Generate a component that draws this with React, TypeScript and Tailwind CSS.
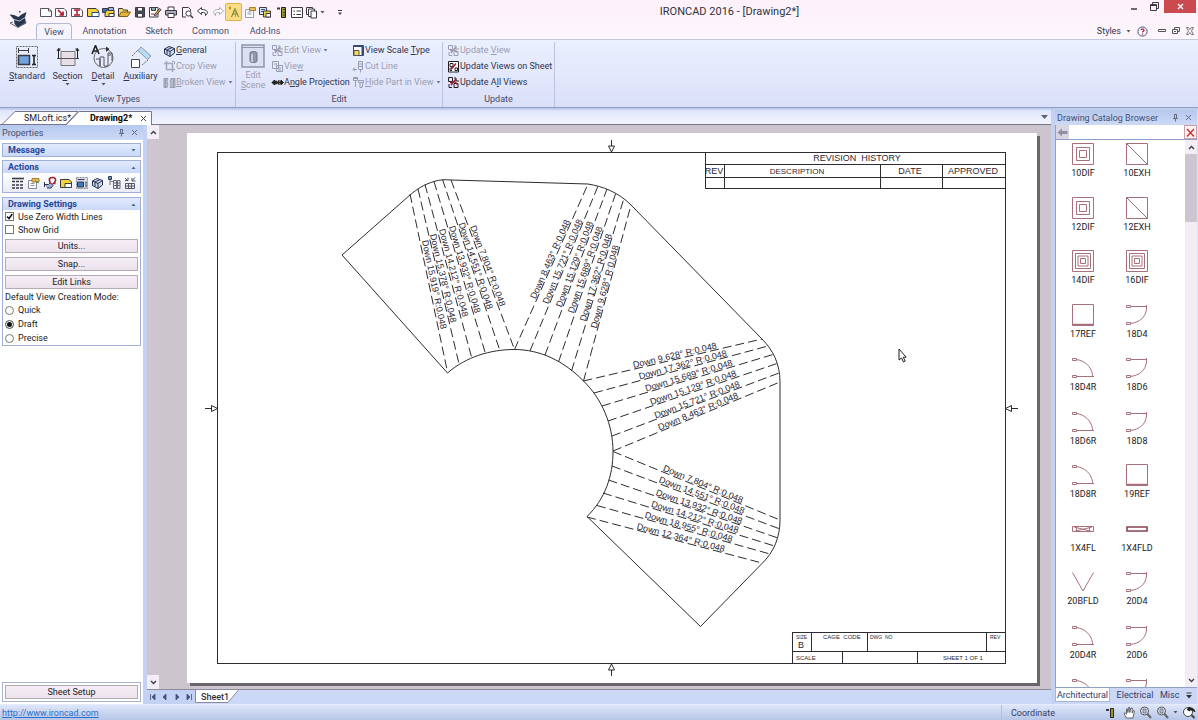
import { useState, type ReactNode } from "react";

function Ico({ w = 14, h = 14, children }: { w?: number; h?: number; children: ReactNode }) {
  return (
    <svg width={w} height={h} viewBox={`0 0 ${w} ${h}`} fill="none" stroke="#3a3a44" strokeWidth="1" className="shrink-0" aria-hidden="true">
      {children}
    </svg>
  );
}

const Caret = ({ color = "#555" }: { color?: string }) => (
  <svg width="5" height="3" viewBox="0 0 5 3" className="shrink-0" aria-hidden="true"><path d="M0.5 0h4L2.5 2.6z" fill={color} /></svg>
);

const sheetPath = "M1.500 3.500h8.500l2.500 2.500v5.500h-11z";

const quickIcons: { name: string; icon: ReactNode; active?: boolean }[] = [
  { name: "New", icon: <><path d={sheetPath} fill="#fff" stroke="#55555f" /><path d="M9.500 3.500V6H12" stroke="#55555f" /></> },
  { name: "New scene", icon: <><path d={sheetPath} fill="#fff" stroke="#55555f" /><path d="M4 5l5 5M9 6.500V10H5.500" stroke="#b01830" strokeWidth="1.700" /></> },
  { name: "New drawing", icon: <><path d={sheetPath} fill="#fff" stroke="#55555f" /><path d="M4 5h6M4 10h6M7 5v5" stroke="#b01830" strokeWidth="1.500" /></> },
  { name: "New sheet", icon: <><path d={sheetPath} fill="#f3d335" /><path d="M6 7.500h7v4H6z" fill="#fff" stroke="#244a8c" /></> },
  { name: "New part", icon: <><path d="M1.500 3.500h6v4h-6z" fill="#3b6cb4" /><path d="M6 5h7v6.500H4V8z" fill="#f3d335" /><path d="M7.500 2.500h5v3h-5z" fill="#9bbbe6" /><path d="M8 8.500h5v3H8z" fill="#fff" /></> },
  { name: "Open", icon: <><path d="M1.500 11V3.500h4l1 1.500h4v2" fill="#f3d668" /><path d="M1.500 11.500l3-4.500h9l-3 4.500z" fill="#e3b53a" stroke="#7a5c1c" /></> },
  { name: "Save", icon: <><path d="M2.500 2.500h9v9.500h-9z" fill="#4a4e5c" /><path d="M4.500 2.500h5v3.500h-5zM4.500 8.500h5v3.500h-5z" fill="#fff" /></> },
  { name: "Save as", icon: <><path d="M1.500 2.500h8.500v9.500H1.500z" fill="#fff" /><path d="M3.500 2.500h4v3h-4z" fill="#8aa" /><path d="M6 10l5.500-6.500 1.500 1.200L7.500 11z" fill="#e5a434" /><path d="M3 9h3" stroke="#b01830" /></> },
  { name: "Print", icon: <><path d="M4 5V2h6v3" fill="#fff" /><path d="M1.500 5.500h11v4.500h-11z" fill="#a9acb8" /><path d="M4 8.500h6v4H4z" fill="#fff" /></> },
  { name: "Preview", icon: <><path d="M2.500 12V2.500h6l2 2V6" /><path d="M2.500 12H6" /><circle cx="8.500" cy="8.500" r="2.600" fill="#fff" /><path d="M10.500 10.500l2.500 2.500" strokeWidth="1.600" /></> },
  { name: "Undo", icon: <path d="M5.500 2.500L1.500 6l4 3.500v-2c3-.5 4.500.5 4 3 3.500-3 2-6-4-6z" fill="#fff" /> },
  { name: "Redo", icon: <path d="M8.500 2.500l4 3.500-4 3.500v-2c-3-.5-4.500.5-4 3-3.500-3-2-6 4-6z" fill="#fff" stroke="#a9a9b4" /> },
  { name: "Smart annotation", active: true, icon: <><path d="M4.500 12L8 3.500l3.500 8.500M6 9h4M7 6h2" stroke="#6d7c2c" /><path d="M8.500 3v9" stroke="#7fa0d0" /><path d="M2 2l2 2M4 2L2 4M3 1.500v3" stroke="#c08a20" /></> },
  { name: "Properties", icon: <><path d="M2.500 4.500h8v8h-8z" fill="#fff" stroke="#99a" /><path d="M4.500 7h4M4.500 9h4" stroke="#8899bb" /><path d="M6.500 2.500h6v3h-6z" fill="#e5c35a" stroke="#a98030" /></> },
  { name: "Layers", icon: <><path d="M1.500 2.500h7v7h-7z" fill="#dce6f8" /><path d="M3 4.500h4M3 6.500h4" stroke="#2c559c" /><path d="M5.500 6h7v6h-7z" fill="#f3d335" /><path d="M8 8.500h4.500v3.500H8z" fill="#fff" /></> },
  { name: "Measure", icon: <><path d="M7.500 2.500h4v10h-4z" fill="#9c9a2c" stroke="#222" /><path d="M9.500 4.500h2M9.500 7.500h2M9.500 10h2" stroke="#222" /><path d="M3 3.500h3" strokeWidth="2" /></> },
  { name: "Options list", icon: <><path d="M1.500 2.500h11v10h-11z" fill="#fff" /><path d="M3.500 6h1.500M3.500 9.500h1.500M6.500 6h4.500M6.500 9.500h4.500" /></> },
  { name: "Windows", icon: <><path d="M1.500 2.500h6v7h-6z" fill="#fff" /><path d="M3.500 4h6v7.500h-6z" fill="#fff" /><path d="M6 6h5.500v7H6z" fill="#fff" /></> },
];

const general = <><path d="M1.500 5L6 2.500l5.500 2V9L7 12.500 1.500 9.500z" fill="#cfd6ee" stroke="#24304e" /><path d="M1.500 5L7 7.500l4.500-3M7 7.500v5M4 6v4.500M9 3.500L4 6" stroke="#24304e" /></>;
const swap = (ink: string, red?: string) => <><path d="M1.500 1.500h4v4h-4zM7 7.500h4v4H7zM2 8v3.500h3M7 2h2v3h3" stroke={ink} /><path d="M4 9l5-6M3 6.500h3M7.500 5.500l3 3" stroke={red ?? ink} strokeWidth="1.500" /></>;

const smallIcons: Record<string, ReactNode> = {
  general,
  crop: <><path d="M3.500 1v8.500H12M1 3.500h8.500V12" stroke="#a3a6ba" strokeWidth="1.500" /><path d="M9 1.500h2.500V4" stroke="#a3a6ba" /></>,
  broken: <><path d="M1 2.500h4l-1 3 1 3-1 3H1zM12 2.500H8l-1 3 1 3-1 3h5z" fill="#b9bccb" stroke="#9a9db0" /><path d="M2.500 3v8M10.500 3v8" stroke="#9a9db0" /></>,
  edit: swap("#9a9db0"),
  view: <><path d="M1.500 1.500h6v7h-6zM5.500 5.500h6v6h-6z" fill="#e4e8f8" stroke="#9a9db0" /><path d="M7 8h3M7 10h3M3 4h3" stroke="#9a9db0" /></>,
  angle: <><path d="M1 6.500L3.500 4v5zM12.500 6.500L10 4v5z" fill="#222" stroke="#222" /><circle cx="5" cy="6.500" r="1.500" fill="#222" stroke="#222" /><path d="M7.500 4.500l2 1v2l-2 1zM1 6.500h11" stroke="#222" /></>,
  scale: <><path d="M1.500 1.500h10v10h-10z" fill="#fff" stroke="#34487c" /><path d="M2 2h9M10.500 2v9" stroke="#34487c" strokeWidth="2" /><path d="M2 6.500h5v5H2z" fill="#f5dc4c" stroke="#555" /></>,
  cut: <><path d="M6.500 1.500h4v8h-4zM1 9.500h4M3 7.500l-2 2 2 2M8.500 9.500v3" stroke="#9a9db0" /><path d="M7 4h3M7 6.500h3" stroke="#9a9db0" /></>,
  hide: <><path d="M1.500 1.500h4v3h-4zM6.500 4.500h5v2h-5zM3.500 5v6M8 7v4.500h2L11 7" stroke="#9a9db0" /><path d="M1 2.500h5" stroke="#9a9db0" /></>,
  upd: swap("#9a9db0"),
  updSheet: <><path d="M1.500 1.500h10v10.500h-10z" fill="#fff" stroke="#222" /><path d="M3 3.500h3v3H3zM8 8h2.500v2.500H8zM3 8v2.500h2" stroke="#222" /><path d="M4 9.500l5-6M3.500 7h3" stroke="#a01830" strokeWidth="1.500" /></>,
  updAll: swap("#222", "#a01830"),
};

function Mn({ t }: { t: string }) {
  const i = t.indexOf("&");
  if (i < 0) return <>{t}</>;
  return <span>{t.slice(0, i)}<span className="underline underline-offset-1">{t[i + 1]}</span>{t.slice(i + 2)}</span>;
}

function Small({ icon, t, off, drop }: { icon: string; t: string; off?: boolean; drop?: boolean }) {
  return (
    <button disabled={off} className="flex h-4 items-center whitespace-nowrap text-[#30344e] disabled:text-[#9a9db2]">
      <Ico w={13} h={13}>{smallIcons[icon]}</Ico>
      <Mn t={t} />
      {drop && <span className="ml-0.5"><Caret color={off ? "#777a90" : "#555"} /></span>}
    </button>
  );
}

function Big({ t, drop, icon, w }: { t: string; drop?: boolean; icon: ReactNode; w: string }) {
  return (
    <button className={`flex flex-col items-center pt-[3px] text-[#30344e] ${w}`}>
      <Ico w={24} h={24}>{icon}</Ico>
      <span className="mt-0.5 h-[11px] leading-[11px]"><Mn t={t} /></span>
      {drop && <span className="mt-px"><Caret /></span>}
    </button>
  );
}

function Group({ label, children, w }: { label: string; children: ReactNode; w: string }) {
  return (
    <section aria-label={label} className={`flex flex-col border-r border-[#bcc3dc] ${w}`}>
      <div className="flex flex-1">{children}</div>
      <div className="flex h-4 items-center justify-center text-[#454a68]">{label}</div>
    </section>
  );
}

function Header() {
  return (
    <header className="flex h-[39px] shrink-0 bg-linear-to-b from-[#fdf1fa] to-[#fdf6fd]">
      <div className="flex w-[36px] items-start justify-center pt-[10px]">
        <svg width="19" height="19" viewBox="0 0 19 19" aria-label="IronCAD" role="img">
          <path d="M0.500 4.500L5 5l4.500 2 3-2.500L17.500 2 16 7.500l1 6-8 4L5.500 14 5 9.500z" fill="#26364c" />
          <path d="M1 13l3 -1M1 13l8 4.500 8.500-5.500" fill="none" stroke="#5d6b7e" />
          <path d="M5 9.500l5.500 1.500 5.500-3.500" fill="none" stroke="#b6c2d0" /><path d="M10 1h1.500v1.500H10z" fill="#26364c" />
        </svg>
      </div>
      <div className="flex min-w-0 flex-1 flex-col">
        <div className="flex h-[23px] items-start">
          <div className="flex w-[310px] items-center pl-0.5 pt-1">
            <div className="flex w-[282px] items-center justify-between">
              {quickIcons.map((q) => (
                <button key={q.name} aria-label={q.name} className={q.active ? "flex h-4 w-[15px] items-center justify-center rounded-[1px] bg-[#f9dc84] outline outline-[#e0b24a]" : "flex h-4 w-[15px] items-center justify-center"}>
                  <Ico>{q.icon}</Ico>
                </button>
              ))}
            </div>
            <Caret />
            <span className="ml-3"><Ico w={7} h={7}><path d="M1 1.500h4" /><path d="M1 3.500h4L3 6z" fill="#444" stroke="none" /></Ico></span>
          </div>
          <h1 className="flex-1 pt-1 text-center text-[11px] leading-4 text-[#33333b]">IRONCAD 2016 - [Drawing2*]</h1>
          <div className="flex w-[85px] items-start justify-end">
            <button aria-label="Minimize" className="flex h-[13px] w-5 items-center justify-center"><Ico w={8} h={8}><path d="M1 6h6" strokeWidth="1.500" /></Ico></button>
            <button aria-label="Restore" className="flex h-[13px] w-5 items-center justify-center"><Ico w={9} h={9}><path d="M2.500 2.500v-2h6v6h-2M0.500 2.500h6v6h-6zM0.500 3.500h6" /></Ico></button>
            <button aria-label="Close" className="mr-0.5 flex h-[13px] w-8 items-center justify-center bg-[#cb4a50]"><Ico w={7} h={7}><path d="M1 1l5 5M6 1L1 6" stroke="#fff" strokeWidth="1.300" /></Ico></button>
          </div>
        </div>
        <div className="flex h-4 items-stretch text-[#454a68]">
          <nav className="flex items-stretch" aria-label="Ribbon">
            <button className="w-9 rounded-t-sm border border-b-0 border-[#b4bad2] bg-[#f3f4fe]">View</button>
            <button className="w-[65px]">Annotation</button>
            <button className="w-11">Sketch</button>
            <button className="w-[59px]">Common</button>
            <button className="w-[50px]">Add-Ins</button>
          </nav>
          <div className="ml-auto flex items-center pr-1 text-[#30344e]">
            <button className="mr-1.5 flex items-center gap-[5px]">Styles <Caret /></button>
            <button aria-label="Help" className="mr-2.5"><Ico w={11} h={11}><circle cx="5.500" cy="5.500" r="4.600" stroke="#3d4f8a" fill="#fff" /><path d="M4 4.300c0-2 3-2 3 0 0 1.200-1.500 1-1.500 2.200M5.500 7.500v1.200" stroke="#c02038" strokeWidth="1.300" /></Ico></button>
            <button aria-label="Minimize document" className="mr-1.5"><Ico w={8} h={8}><path d="M0.500 2.500h7v2h-7z" stroke="#555" /></Ico></button>
            <button aria-label="Restore document" className="mr-1.5"><Ico w={8} h={8}><path d="M2.500 2.500v-2h5v4h-2M0.500 2.500h5v4h-5zM2 4.500h2" stroke="#555" /></Ico></button>
            <button aria-label="Close document"><Ico w={8} h={8}><path d="M0.500 0.500h2L4 2.500l1.500-2h2L5.500 4l2 3.500h-2L4 5.500 2.500 7.500h-2l2-3.500z" stroke="#555" strokeWidth=".8" /></Ico></button>
          </div>
        </div>
      </div>
    </header>
  );
}

function Ribbon() {
  return (
    <div className="flex h-[68px] shrink-0 border-t border-[#c3c8dc] bg-linear-to-b from-[#ebf0fe] to-[#dbe0fa] pt-0.5">
      <Group label="View Types" w="w-[236px]">
        <Big w="ml-[7px] w-10" t="&Standard" icon={<><path d="M1.500 1.500h21v21h-21z" strokeDasharray="2 1" stroke="#666" /><path d="M3.500 5.500h10M3.500 3v5M13.500 3v5" /><path d="M3.500 10.500h11v9h-11z" fill="#6fa3de" strokeWidth="1.500" /><path d="M17 10.500h4M17 19.500h4M19 10.500v9" strokeWidth="1.600" stroke="#222" /></>} />
        <Big w="w-[41px]" drop t="Se&ction" icon={<><path d="M5 6.500h14v14H5z" fill="#e6dfe8" stroke="#777" /><path d="M1 13.500h22" stroke="#555" /><path d="M2.500 14V4M21.500 14V4M1 6l1.500-2.500L4 6M20 6l1.500-2.500L23 6M2.500 4h2M21.500 4h-2" stroke="#222" /></>} />
        <Big w="w-[30px]" drop t="&Detail" icon={<><circle cx="12.500" cy="13" r="9.500" stroke="#666" /><path d="M5 14h4v7M9 21V12h4v9h4V8h4v8M17 10h3" stroke="#555" /><path d="M1 9L4.500 0.500 8 9M2.500 6h4" stroke="#222" strokeWidth="1.600" /><path d="M15 2l3 2-3 2.500" fill="#333" /></>} />
        <Big w="w-[45px]" t="&Auxiliary" icon={<><path d="M2.500 14.500h8v8h-8z" fill="#fff" stroke="#444" /><path d="M12 2l10 9-3.500 3.500L9 5.500z" fill="#b9dcf5" stroke="#8a98a8" /><path d="M3 11L9 5M13 20l6-5" strokeDasharray="2 1" stroke="#666" /></>} />
        <div className="flex flex-col">
          <Small icon="general" t="&General" /><Small icon="crop" t="Crop View" off /><Small icon="broken" t="&Broken View" off drop />
        </div>
      </Group>
      <Group label="Edit" w="w-[207px]">
        <button disabled className="ml-1.5 flex w-[22px] flex-col items-center pt-0.5 text-[#9a9db2]">
          <Ico w={24} h={24}><path d="M1 1h22v22H1z" stroke="#9194aa" fill="#dde0f0" strokeWidth="1.500" /><path d="M1 3.500h22" stroke="#9194aa" /><path d="M9 9c0-2 7-2 7 0v8c0 2-7 2-7 0z" fill="#9296ac" stroke="#6f7390" /><path d="M11 10v8" stroke="#fff" /></Ico>
          <span className="mt-0.5 leading-[10px]">Edit</span><span className="leading-[10px]"><Mn t="&Scene" /></span>
        </button>
        <div className="ml-[7px] flex w-[81px] flex-col">
          <Small icon="edit" t="Edit View" off drop /><Small icon="view" t="Vie&w" off /><Small icon="angle" t="A&ngle Projection" />
        </div>
        <div className="flex flex-col">
          <Small icon="scale" t="View Scale &Type" /><Small icon="cut" t="Cut Line" off /><Small icon="hide" t="&Hide Part in View" off drop />
        </div>
      </Group>
      <Group label="Update" w="w-[112px]">
        <div className="ml-1 flex flex-col">
          <Small icon="upd" t="Update &View" off /><Small icon="updSheet" t="Update Views on Sheet" /><Small icon="updAll" t="Update A&ll Views" />
        </div>
      </Group>
    </div>
  );
}

const Pin = () => <Ico w={7} h={8}><path d="M2 0.500h3M2.500 0.500v3.500M4.500 0.500v3.500M1 4.500h5M3.500 4.500v3" stroke="#666c88" /></Ico>;
const Cross = ({ c = "#666c88" }: { c?: string }) => <Ico w={7} h={7}><path d="M1 1l5 5M6 1L1 6" stroke={c} /></Ico>;

function PanelTitle({ t }: { t: string }) {
  return (
    <div className="flex h-[15px] shrink-0 items-center gap-1.5 bg-linear-to-b from-[#b5c8ee] to-[#cddaf6] pl-0.5 pr-[5px] text-[#454f70]">
      <h2 className="mr-auto whitespace-nowrap">{t}</h2>
      <button aria-label={`Pin ${t}`}><Pin /></button>
      <button aria-label={`Close ${t}`}><Cross /></button>
    </div>
  );
}

function Box({ t, open, children }: { t: string; open?: boolean; children?: ReactNode }) {
  return (
    <section className="border border-[#a0b0d8] bg-white">
      <button className="flex h-3 w-full items-center bg-linear-to-b from-[#e2ebfd] to-[#c9d8f8] pl-[5px] pr-1 font-bold text-[#24489c]">
        <span className="mr-auto">{t}</span>
        <span className={open ? "rotate-180" : ""}><Caret color="#50618f" /></span>
      </button>
      {children}
    </section>
  );
}

const actionIcons: [string, ReactNode][] = [
  ["Line style", <g key="a"><path d="M1 2.500h12" strokeWidth="1.600" /><path d="M1 5.500h12M1 9h12M1 12h12" strokeWidth="1.600" strokeDasharray="3 1" /></g>],
  ["Sheet properties", <g key="b"><path d="M1.500 4.500h8v8h-8z" fill="#fff" stroke="#889" /><path d="M3.500 7.500h4M3.500 9.500h4" stroke="#8899bb" /><path d="M5 2.500h7v3.500H5z" fill="#e0b85a" stroke="#a98030" /><path d="M8 5l4 2" stroke="#4d8f3a" /></g>],
  ["Snap", <g key="c"><path d="M1.500 6v5M1.500 8.500h4l2-2 2.500 3-2 2.500H4" fill="#9fb4dc" stroke="#334" /><path d="M7.500 7.500C5 2 7 1.500 9.500 1.500S13.500 3 12 6l-1.500 1.500h2" stroke="#9b2034" strokeWidth="1.600" /></g>],
  ["New sheet", <g key="d"><path d={sheetPath} fill="#f3d335" /><path d="M6 7.500h6.500v4H6z" fill="#fff" stroke="#345" /></g>],
  ["Standard view", <g key="e"><path d="M1.500 1.500h11v11h-11z" fill="#dde" stroke="#889" strokeDasharray="2 1" /><path d="M2.500 6h6v5h-6z" fill="#3f78bf" /><path d="M11 5.500v6M2.500 3.500h7" /></g>],
  ["General view", <g key="f">{general}</g>],
  ["Views", <g key="g"><path d="M1.500 0.500h3v3h-3z" fill="#5f8fd0" /><path d="M3 4v5M4 5.500h2M6.500 4.500h3v8h-3zM10.500 4.500h2.500v8h-2.500zM7 7h6M7 9.500h6" stroke="#667" /></g>],
  ["Table", <g key="h"><path d="M2 2l3 3M12 1.500L9 5M5 1.500v3H2M9 2v3h3.500" stroke="#556" /><path d="M2.500 7.500h9v5h-9zM2.500 10h9M5.500 7.500v5M8.500 7.500v5" stroke="#556" /></g>],
];

const flat = "h-[14px] border border-[#b3abb5] bg-linear-to-b from-[#f6eef6] to-[#ece2ec] text-[#222]";

function Properties() {
  return (
    <aside className="flex w-[147px] shrink-0 flex-col border-r-4 border-[#c4d1f2] bg-white">
      <PanelTitle t="Properties" />
      <div className="flex flex-1 flex-col px-0.5 pt-[3px]">
        <div className="flex flex-col gap-[3px] pb-1">
          <Box t="Message" />
          <Box t="Actions" open>
            <div className="flex h-[19px] items-center gap-0.5 bg-linear-to-b from-white to-[#e8ebf5] pl-2">
              {actionIcons.map(([n, i]) => <button key={n} aria-label={n}><Ico>{i}</Ico></button>)}
            </div>
          </Box>
        </div>
        <Box t="Drawing Settings" open>
          <div className="flex flex-col px-0.5 text-[#1c1c22]">
            {[["Use Zero Width Lines", true], ["Show Grid", false]].map(([l, c]) => (
              <label key={String(l)} className="flex h-[13px] items-center gap-1">
                <span className="relative flex size-[9px]">
                  <input type="checkbox" defaultChecked={Boolean(c)} className="peer size-[9px] appearance-none border border-[#777] bg-white" />
                  <svg viewBox="0 0 9 9" className="pointer-events-none absolute inset-0 hidden peer-checked:block" aria-hidden="true"><path d="M2 4.500l2 2L7.300 2" fill="none" stroke="#111" strokeWidth="1.500" /></svg>
                </span>
                {l}
              </label>
            ))}
            <div className="flex flex-col gap-1 pb-0.5 pt-[3px]">
              <button className={flat}>Units...</button>
              <button className={flat}>Snap...</button>
              <button className={flat}>Edit Links</button>
            </div>
            <fieldset>
              <legend className="h-3 leading-3">Default View Creation Mode:</legend>
              {["Quick", "Draft", "Precise"].map((m) => (
                <label key={m} className="flex h-[14px] items-center gap-1">
                  <input type="radio" name="mode" defaultChecked={m === "Draft"} className="size-[9px] appearance-none rounded-full border border-[#777] bg-white checked:bg-[#111] checked:shadow-[inset_0_0_0_1px_white]" />
                  {m}
                </label>
              ))}
            </fieldset>
          </div>
        </Box>
        <div className="mb-0.5 mt-auto flex flex-col border border-[#a9b2d0] p-0.5">
          <button className={flat}>Sheet Setup</button>
        </div>
      </div>
    </aside>
  );
}

type Fold = [number, number, number, number, string, number, number];
const folds: Fold[] = [
  [410, 194, 447.5, 372, "Down 15.919° R:0.048", 421, 241],
  [418, 189, 459, 364, "Down 15.378° R:0.048", 429, 235],
  [425, 184.5, 471.5, 357, "Down 14.212° R:0.048", 438, 230],
  [434, 181.5, 485, 352, "Down 13.932° R:0.048", 448, 227],
  [442.5, 179.5, 500, 351, "Down 14.551° R:0.048", 457.5, 224],
  [451, 180, 514.5, 349.5, "Down 7.804° R:0.048", 469, 227],
  [514.5, 349.5, 588, 184, "Down 8.463° R:0.048", 536.5, 300],
  [530, 351, 598, 186, "Down 15.721° R:0.048", 549, 305],
  [545, 355, 607, 189, "Down 15.129° R:0.048", 562.5, 308],
  [558.5, 362, 616, 192.5, "Down 15.689° R:0.048", 574.5, 314],
  [571.5, 371, 624, 198, "Down 17.362° R:0.048", 586.5, 322],
  [583.5, 381, 631, 205, "Down 9.628° R:0.048", 597.5, 329],
  [583.5, 381, 762, 339, "Down 9.628° R:0.048", 634, 369],
  [594, 393, 768, 346, "Down 17.362° R:0.048", 640, 380.5],
  [602, 406, 773, 354.5, "Down 15.689° R:0.048", 646.5, 392.5],
  [608, 421, 777, 363.5, "Down 15.129° R:0.048", 651.5, 406],
  [612, 436, 779, 373, "Down 15.721° R:0.048", 656, 419.5],
  [613, 451, 780, 382, "Down 8.463° R:0.048", 660, 431.5],
  [613, 451.5, 780, 520, "Down 7.804° R:0.048", 662, 471.5],
  [612, 466, 780, 529, "Down 14.551° R:0.048", 658, 483],
  [608.5, 480, 778, 538, "Down 13.932° R:0.048", 655, 496],
  [603, 493, 774.5, 546, "Down 14.212° R:0.048", 650.5, 507.5],
  [597, 505.5, 770, 554, "Down 18.955° R:0.048", 644, 518.5],
  [587, 517, 762, 563, "Down 12.364° R:0.048", 636, 530],
];

function Drawing() {
  return (
    <svg viewBox="187 133 850 550" className="absolute inset-0 size-full" fontFamily="'Liberation Sans', Arial, sans-serif" fill="none" stroke="#2c2c32" strokeWidth="1">
      <g shapeRendering="crispEdges">
        <path d="M217.500 152.500H1005.500V663.500H217.500z" />
        <path d="M705.500 152.500V188.500H1005M705.500 164.500H1005M705.500 177.500H1005M724.500 164.500V188M880.500 164.500V188M942.500 164.500V188" />
        <path d="M792.500 663V632.500H1005M792.500 651.500H1005M811.500 632.500V651M867.500 632.500V651M986.500 632.500V651M842.500 651.500V663M917.500 651.500V663" />
        <path d="M611.500 140V152M611.500 664V676M205 408.500H217M1006 408.500H1018" />
      </g>
      <path d="M608.500 146l3 6 3-6zM608.500 670l3-6 3 6zM211.500 405.500l6 3-6 3zM1011.500 405.500l-6 3 6 3z" fill="#fff" />
      <path strokeLinejoin="round" d="M447.500 373L342 255 410 195C417 189 424 184.500 434 181.500 440 179.500 445 179.500 451 180L588 184C603 186.500 618 192 631 205L762 339C773 350 780 364 780 382V520C780 537 774 552 762 563.500L700.500 626.500 587 516.500C605 499 613 476 613 451.500 613 425 602 399 583.500 381 564 361 540 349.500 514.500 349.500 490 349.500 466 357 447.500 373" />
      {folds.map(([x1, y1, x2, y2], i) => <path key={i} d={`M${x1} ${y1}L${x2} ${y2}`} strokeDasharray="9 4" />)}
      <g fill="#2c2632" stroke="none" fontSize="9">
        {folds.map(([x1, y1, x2, y2, t, x, y], i) => (
          <text key={i} transform={`translate(${x} ${y}) rotate(${(Math.atan2(y2 - y1, x2 - x1) * 180) / Math.PI})`} y="-1">{t}</text>
        ))}
        <g textAnchor="middle">
          <text x="857" y="161">REVISION&#160; HISTORY</text>
          <text x="714" y="174">REV</text>
          <text x="797" y="174" fontSize="8">DESCRIPTION</text>
          <text x="910" y="174">DATE</text>
          <text x="973" y="174">APPROVED</text>
        </g>
        <g fontSize="6">
          <text x="796" y="639" fontSize="5">SIZE</text>
          <text x="798" y="648" fontSize="9">B</text>
          <text x="823" y="639">CAGE&#160; CODE</text>
          <text x="870" y="639" fontSize="5">DWG&#160; NO</text>
          <text x="990" y="639" fontSize="5">REV</text>
          <text x="796" y="660">SCALE</text>
          <text x="943" y="660">SHEET 1 OF 1</text>
        </g>
      </g>
      <path d="M899 349v11l2.500-2 2 4 1.700-1-2-3.800h3z" fill="#fff" stroke="#222" />
    </svg>
  );
}

function Scroll({ thumb }: { thumb: string }) {
  return (
    <div className="flex w-3 shrink-0 flex-col bg-[#f3edf6]">
      <button aria-label="Scroll up" className="flex h-[14px] items-center justify-center"><Ico w={7} h={5}><path d="M1 4l2.500-2.500L6 4" strokeWidth="1.300" /></Ico></button>
      <div className="flex-1"><div className={`bg-[#cdc5cf] ${thumb}`} /></div>
      <button aria-label="Scroll down" className="flex h-[14px] items-center justify-center"><Ico w={7} h={5}><path d="M1 1l2.500 2.500L6 1" strokeWidth="1.300" /></Ico></button>
    </div>
  );
}

function DocTabs() {
  return (
    <div className="flex h-[15px] shrink-0 items-stretch border-b border-[#77758a] bg-linear-to-b from-[#dfe6fb] to-[#f4f4fe]">
      <div className="relative flex w-[152px]">
        <svg viewBox="0 0 152 15" className="absolute inset-0 h-[15px] w-[152px]" fill="#fff" stroke="#77758a" aria-hidden="true"><path d="M2 14.500L15 1.500H78L66 14.500z" /><path d="M66 15L79 1.500H151.500V15" /></svg>
        <button className="relative ml-6 w-[46px] whitespace-nowrap pt-0.5 text-left text-[#222]">SMLoft.ics*</button>
        <button className="relative ml-5 w-[50px] pt-0.5 text-left font-bold text-black">Drawing2*</button>
        <button aria-label="Close tab" className="relative pt-0.5"><Cross c="#444" /></button>
      </div>
      <button aria-label="Tab list" className="ml-auto mr-px flex w-3 items-center justify-center"><Ico w={7} h={4}><path d="M0 0h7L3.500 4z" fill="#5c627a" stroke="none" /></Ico></button>
    </div>
  );
}

const navs = ["M1.500 1v6M6 1L3 4l3 3z", "M5 1L2 4l3 3z", "M3 1l3 3-3 3z", "M6.500 1v6M2 1l3 3-3 3z"];

function SheetTabs() {
  return (
    <div className="flex h-[15px] shrink-0 items-stretch border-t border-[#8c8a9c] bg-[#cbd8f6]">
      <div className="flex w-12 items-center justify-around bg-[#c3d1f3]">
        {navs.map((d, i) => <button key={d} aria-label={["First", "Previous", "Next", "Last"][i] + " sheet"}><Ico w={8} h={8}><path d={d} fill="#44507c" stroke="#44507c" strokeWidth=".8" /></Ico></button>)}
      </div>
      <button className="relative flex w-11 items-center pl-[6px] font-medium text-[#33333f]">
        <svg viewBox="0 0 44 13" className="absolute inset-0 h-[13px] w-11" fill="#fff" stroke="#8c8a9c" aria-hidden="true"><path d="M0.500 0V12.500H33L43.500 0" /></svg>
        <span className="relative">Sheet1</span>
      </button>
    </div>
  );
}

function Sym({ k }: { k: string }) {
  const d: Record<string, ReactNode> = {
    dif: <path d="M0.500 0.500h21v21h-21zM4.500 4.500h13v13h-13zM7.500 7.500h7v7h-7z" />,
    dif2: <path d="M0.500 0.500h21v21h-21zM3.500 3.500h15v15h-15zM6 6h10v10H6zM8.500 8.500h5v5h-5z" />,
    exh: <><path d="M0.500 0.500h21v21h-21z" /><path d="M0.500 0.500l21 21" stroke="#6a5058" strokeWidth=".8" /></>,
    ref: <><path d="M0.500 0.500h21v21h-21z" /><path d="M0 20.500h22" strokeWidth="1.500" /></>,
    door: <path d="M0.500 1.500h4v2h-4zM4 2.500h17M20.500 1v4C19.500 13 14 18.500 4 19.500M0.500 18.500h4v2h-4z" />,
    doorR: <path d="M0.500 1.500h4v2h-4zM4 2.500c9 1 15 7 16.500 15v2.500M0.500 18.500h4v2h-4zM4 19.500h18" />,
    fl: <path d="M0.500 8.500h21v5h-21zM2 9l18 4.500M2 13.500L20 9M4.500 8.500v5M17.500 8.500v5" />,
    fld: <path d="M1 9h20v4H1z" strokeWidth="1.600" stroke="#884450" />,
    bfld: <path d="M0.500 1.500L11 20 21.500 1.500" />,
  };
  return <svg width="22" height="22" viewBox="0 0 22 22" fill="none" stroke="#a8707a" aria-hidden="true">{d[k]}</svg>;
}

const catalog: [string, string][] = [
  ["10DIF", "dif"], ["10EXH", "exh"], ["12DIF", "dif"], ["12EXH", "exh"], ["14DIF", "dif2"], ["16DIF", "dif2"],
  ["17REF", "ref"], ["18D4", "door"], ["18D4R", "doorR"], ["18D6", "door"], ["18D6R", "doorR"], ["18D8", "door"],
  ["18D8R", "doorR"], ["19REF", "ref"], ["1X4FL", "fl"], ["1X4FLD", "fld"], ["20BFLD", "bfld"], ["20D4", "door"],
  ["20D4R", "doorR"], ["20D6", "door"],
];

function Catalog() {
  const [q, setQ] = useState("");
  return (
    <aside className="flex w-[147px] shrink-0 flex-col border-l-4 border-[#c4d1f2] bg-[#dbe3f9] pr-px">
      <PanelTitle t="Drawing Catalog Browser" />
      <div className="flex h-[14px] shrink-0 items-stretch border-l border-[#8fa0cc] bg-white">
        <button aria-label="Back" className="flex w-[13px] items-center justify-center bg-[#d8d6e2]"><Ico w={11} h={9}><path d="M0.500 4.500L5 0.500V3h5.500v3H5v2.500z" fill="#8e90a0" stroke="none" /></Ico></button>
        <input aria-label="Search catalog" value={q} onChange={(e) => setQ(e.target.value)} className="min-w-0 flex-1 px-1 outline-none" />
        <button aria-label="Clear" className="flex w-[13px] items-center justify-center border border-[#c8a0a8] bg-[#fbf0f2]"><Ico w={9} h={9}><path d="M1 1l7 7.500M8 1L1 8.500" stroke="#cc3030" strokeWidth="1.400" /></Ico></button>
      </div>
      <div className="flex min-h-0 flex-1 border-l border-t border-[#8fa0cc] bg-white">
        <ul className="grid h-full flex-1 grid-cols-[54px_54px] grid-rows-[repeat(10,1fr)_9px] overflow-hidden pl-px pt-[3px]">
          {catalog.map(([n, k]) => (
            <li key={n}><button className="flex w-[52px] flex-col items-center gap-0.5 leading-3 text-[#222]"><Sym k={k} />{n}</button></li>
          ))}
          <li className="w-[52px] overflow-hidden"><button aria-label="20D6R" className="flex w-full justify-center"><Sym k="doorR" /></button></li>
          <li className="w-[52px] overflow-hidden"><button aria-label="20D8" className="flex w-full justify-center"><Sym k="door" /></button></li>
        </ul>
        <Scroll thumb="h-[68px]" />
      </div>
      <div className="flex h-[17px] shrink-0 items-start justify-between border-t border-[#8fa0cc] bg-[#cbd7f5] pr-[5px] leading-[14px] text-[#30406c]">
        <button className="h-[14px] border border-t-0 border-[#a9b5d8] bg-white px-px leading-3">Architectural</button>
        <button>Electrical</button>
        <button>Misc</button>
        <span className="pt-1"><Ico w={6} h={7}><path d="M0.500 1h5" /><path d="M0 3h6L3 6.500z" fill="#333" stroke="none" /></Ico></span>
      </div>
    </aside>
  );
}

function Status() {
  const lens = <><circle cx="5.500" cy="5" r="4" fill="#e4eaf6" stroke="#555" /><path d="M8.500 8l3.500 4" strokeWidth="2" stroke="#666" /><path d="M4 3h3v4H4z" fill="#b9c4d8" stroke="#667" strokeWidth=".8" /></>;
  return (
    <footer className="flex h-4 shrink-0 items-center border-t border-[#e6ecfb] bg-linear-to-b from-[#dde6fa] to-[#b7c5e6]">
      <a href="http://www.ironcad.com" className="ml-0.5 text-[#2f6fcb] underline">http://www.ironcad.com</a>
      <div className="ml-auto flex h-full w-[197px] items-center border-l border-[#b3bedb] pl-[9px] pr-0.5">
        <span className="mr-auto text-[#38405c]">Coordinate</span>
        <button aria-label="Measure" className="mr-2"><Ico w={10} h={12}><path d="M5.500 1.500h3v9h-3z" fill="#9c9a2c" stroke="#222" /><path d="M1 3h3" strokeWidth="2" /></Ico></button>
        <button aria-label="Pan" className="mr-1"><Ico w={12} h={13}><path d="M3.500 12L1 7.500l1-.8 1.500 1.500V3h1.300v3.500L5.500 1.500h1.200v5L8 2h1.200v5l1-2.500 1.200.5-1.400 7z" fill="#fff" stroke="#555" strokeWidth=".9" /></Ico></button>
        <button aria-label="Zoom window" className="mr-1"><Ico w={13} h={13}>{lens}</Ico></button>
        <button aria-label="Fit" className="mr-1"><Ico w={13} h={13}>{lens}</Ico></button>
        <Caret />
        <button aria-label="Zoom back" className="ml-1"><Ico w={14} h={13}><circle cx="6" cy="6" r="4.500" fill="#fff" stroke="#444" /><path d="M9.500 9l3 3" strokeWidth="2" stroke="#444" /><path d="M13 6C12 2 9 1 6 3M8 1L5 3.500l3 1.500z" fill="#222" stroke="#222" /></Ico></button>
      </div>
    </footer>
  );
}

export default function App() {
  return (
    <div className="flex h-screen flex-col overflow-hidden bg-[#cbd8f6] font-[Roboto,sans-serif] text-[9px] leading-3 select-none">
      <Header />
      <Ribbon />
      <div className="h-[3px] shrink-0 border-t border-[#8f9dc2] bg-[#c0cdef]" />
      <main className="flex min-h-0 flex-1">
        <div className="flex min-w-0 flex-1 flex-col">
          <DocTabs />
          <div className="flex min-h-0 flex-1">
            <Properties />
            <div className="flex min-w-0 flex-1 flex-col">
              <div className="flex min-h-0 flex-1">
                <Scroll thumb="h-full" />
                <div className="flex min-w-0 flex-1 bg-[#cdc5cd] pb-[6px] pl-7 pr-[14px] pt-2">
                  <div className="relative flex-1 bg-white shadow-[3px_3px_0_#6b666c]"><Drawing /></div>
                </div>
              </div>
              <SheetTabs />
            </div>
          </div>
        </div>
        <Catalog />
      </main>
      <Status />
    </div>
  );
}
